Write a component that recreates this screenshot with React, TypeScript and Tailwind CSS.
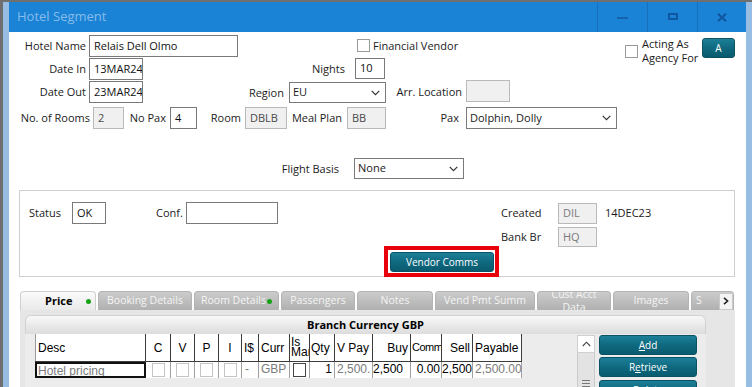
import React from "react";

const teal =
  "bg-[linear-gradient(#1c8098,#0f697f_50%,#0a5b6f)] border border-[#0a5264] rounded-[3px] text-white text-[10px] flex items-center justify-center shrink-0";

function Field({ className = "", gray = false, children }: { className?: string; gray?: boolean; children?: React.ReactNode }) {
  return (
    <div
      className={`shrink-0 border flex items-center pl-[4px] whitespace-nowrap overflow-hidden ${
        gray ? "bg-[#f0f0f0] border-[#b9b9b9] text-[#4a4a4a]" : "bg-white border-[#7a7a7a] text-[#111]"
      } ${className}`}
    >
      {children}
    </div>
  );
}

function Select({ className = "", value }: { className?: string; value: string }) {
  return (
    <div className={`shrink-0 border border-[#7a7a7a] bg-white flex items-center pl-[3px] pr-[5px] ${className}`}>
      <span className="flex-1 whitespace-nowrap">{value}</span>
      <svg width="9" height="6" viewBox="0 0 9 6">
        <path d="M0.7 0.8 L4.5 4.6 L8.3 0.8" fill="none" stroke="#333" strokeWidth="1.2" />
      </svg>
    </div>
  );
}

function Label({ className = "", children }: { className?: string; children: React.ReactNode }) {
  return <div className={`shrink-0 text-right whitespace-nowrap ${className}`}>{children}</div>;
}

function Check({ className = "" }: { className?: string }) {
  return <div className={`shrink-0 w-[13px] h-[13px] border border-[#9a9a9a] bg-white ${className}`} />;
}

const tabOff =
  "h-[19px] rounded-t-[4px] bg-[linear-gradient(#cbcbcb,#b0b0b0)] border border-b-0 border-[#b4b4b4] text-[#f4f4f4] text-[10.5px] flex items-center justify-center shrink-0 overflow-hidden whitespace-nowrap";

const headCols = [
  { label: "Desc", w: "w-[111px]", a: "justify-start pl-[2px] border-l border-l-[#9a9a9a]" },
  { label: "C", w: "w-[25px]", a: "justify-center" },
  { label: "V", w: "w-[24px]", a: "justify-center" },
  { label: "P", w: "w-[24px]", a: "justify-center" },
  { label: "I", w: "w-[23px]", a: "justify-center" },
  { label: "I$", w: "w-[17px]", a: "justify-start pl-[2px]" },
  { label: "Curr", w: "w-[31px]", a: "justify-start pl-[2px]" },
  { label: "IsMar", w: "w-[20px]", a: "" },
  { label: "Qty", w: "w-[25px]", a: "justify-start pl-[1px]" },
  { label: "V Pay", w: "w-[38px]", a: "justify-start pl-[2px]" },
  { label: "Buy", w: "w-[38px]", a: "justify-end pr-[2px]" },
  { label: "Comm", w: "w-[31px]", a: "justify-start pl-[1px] text-[11px] tracking-[-0.5px]" },
  { label: "Sell", w: "w-[31px]", a: "justify-end pr-[2px]" },
  { label: "Payable", w: "w-[49px]", a: "justify-start pl-[2px]" },
];

function Box({ dark = false }: { dark?: boolean }) {
  return (
    <div
      className={`w-[13px] h-[14px] mt-[1px] bg-white border ${dark ? "border-[#444]" : "border-[#c4c4c4]"}`}
    />
  );
}

export default function App() {
  return (
    <div className="w-[752px] h-[387px] overflow-hidden flex flex-col bg-white font-['Open_Sans',sans-serif] text-[11px] text-[#1b1b1b]">
      <div className="h-[2px] bg-[#6f6f6f] shrink-0" />
      <div className="flex flex-1 min-h-0">
        <div className="w-[3px] bg-[#6f6f6f] shrink-0" />
        <div className="w-[6px] bg-[#97bde2] shrink-0" />
        <div className="w-[737px] flex flex-col [&>*]:shrink-0">
          {/* title bar */}
          <div className="h-[30px] bg-[#1b83d6] flex items-center">
            <div className="pl-[8px] text-[13px] text-[#86bcea]">Hotel Segment</div>
            <div className="ml-auto flex h-full">
              <div className="w-[50px] h-full border-l border-[#176fbd] flex items-center justify-center">
                <div className="w-[11px] h-[2px] bg-[#1461ac] mt-[2px]" />
              </div>
              <div className="w-[50px] h-full border-l border-[#176fbd] flex items-center justify-center">
                <div className="w-[10px] h-[7px] border-2 border-[#0f57a0] mb-[1px]" />
              </div>
              <div className="w-[49px] h-full border-l border-[#176fbd] flex items-center justify-center">
                <svg width="10" height="9" viewBox="0 0 10 9">
                  <path d="M1 0.8 L9 8.2 M9 0.8 L1 8.2" stroke="#0f57a0" strokeWidth="2.2" />
                </svg>
              </div>
            </div>
          </div>

          {/* row 1 */}
          <div className="flex items-start mt-[3px] h-[23px]">
            <Label className="w-[80px] pr-[3px] leading-[22px]">Hotel Name</Label>
            <Field className="w-[149px] h-[22px]">Relais Dell Olmo</Field>
            <div className="w-[119px] shrink-0" />
            <div className="w-[268px] shrink-0 flex items-center mt-[4px]">
              <Check />
              <span className="ml-[3px] leading-[13px]">Financial Vendor</span>
            </div>
            <div className="w-[77px] shrink-0 flex items-start">
              <Check className="mt-[10px]" />
              <div className="ml-[4px] mt-[2px] leading-[14px] whitespace-nowrap">
                Acting As
                <br />
                Agency For
              </div>
            </div>
            <div className={`${teal} w-[33px] h-[20px] mt-[3px]`}>A</div>
          </div>

          {/* row 2 */}
          <div className="flex items-start h-[23px]">
            <Label className="w-[80px] pr-[3px] leading-[22px]">Date In</Label>
            <Field className="w-[54px] h-[22px]">13MAR24</Field>
            <Label className="w-[212px] pr-[10px] leading-[22px]">Nights</Label>
            <Field className="w-[30px] h-[21px]">10</Field>
          </div>

          {/* row 3 */}
          <div className="flex items-start h-[26px]">
            <Label className="w-[80px] pr-[3px] leading-[22px]">Date Out</Label>
            <Field className="w-[54px] h-[22px]">23MAR24</Field>
            <Label className="w-[146px] pr-[5px] leading-[22px] mt-[1px]">Region</Label>
            <Select className="w-[97px] h-[21px] mt-[1px]" value="EU" />
            <Label className="w-[80px] pr-[4px] leading-[22px]">Arr. Location</Label>
            <Field gray className="w-[44px] h-[22px] mt-[-1px]" />
          </div>

          {/* row 4 */}
          <div className="flex items-start h-[22px]">
            <Label className="w-[84px] pr-[3px] leading-[22px]">No. of Rooms</Label>
            <Field gray className="w-[31px] h-[22px]">2</Field>
            <Label className="w-[46px] pr-[4px] leading-[22px]">No Pax</Label>
            <Field className="w-[27px] h-[22px]">4</Field>
            <Label className="w-[48px] pr-[4px] leading-[22px]">Room</Label>
            <Field gray className="w-[42px] h-[22px]">DBLB</Field>
            <Label className="w-[60px] pr-[5px] leading-[22px]">Meal Plan</Label>
            <Field gray className="w-[39px] h-[22px]">BB</Field>
            <Label className="w-[80px] pr-[7px] leading-[22px]">Pax</Label>
            <Select className="w-[151px] h-[22px]" value="Dolphin, Dolly" />
          </div>

          {/* row 5 */}
          <div className="flex items-start h-[21px] mt-[29px]">
            <Label className="w-[345px] pr-[15px] leading-[21px]">Flight Basis</Label>
            <Select className="w-[110px] h-[21px]" value="None" />
          </div>

          {/* status box */}
          <div className="mt-[11px] ml-[10px] w-[716px] h-[87px] border border-[#cfcfcf]">
            <div className="flex items-center h-[22px] mt-[11px]">
              <div className="w-[52px] pl-[9px] shrink-0">Status</div>
              <Field className="w-[34px] h-[22px]">OK</Field>
              <div className="w-[50px] shrink-0" />
              <div className="w-[30px] shrink-0">Conf.</div>
              <Field className="w-[92px] h-[22px]" />
              <div className="w-[223px] shrink-0" />
              <div className="w-[57px] shrink-0">Created</div>
              <Field gray className="w-[39px] h-[21px] text-[#7a7a7a]">DIL</Field>
              <div className="ml-[8px]">14DEC23</div>
            </div>
            <div className="flex items-center h-[20px] mt-[3px]">
              <div className="w-[481px] shrink-0" />
              <div className="w-[57px] shrink-0">Bank Br</div>
              <Field gray className="w-[39px] h-[20px] text-[#7a7a7a]">HQ</Field>
            </div>
            <div className="ml-[364px] mt-[-1px] w-fit border-4 border-[#e8000b] pt-[2px] pl-[2px] pr-[1px] pb-[1px]">
              <div className={`${teal} w-[104px] h-[20px]`}>Vendor Comms</div>
            </div>
          </div>

          {/* tabs */}
          <div className="ml-[11px] w-[715px] mt-[14px]">
            <div className="flex gap-[2px] h-[19px] items-end">
              <div className="w-[76px] h-[19px] rounded-t-[4px] bg-[linear-gradient(#fbfbfb,#e9e9e9)] border border-b-0 border-[#cfcfcf] flex items-center shrink-0">
                <span className="pl-[24px] font-bold text-black">Price</span>
                <span className="ml-[14px] w-[5px] h-[5px] rounded-full bg-[#17a317]" />
              </div>
              <div className={`${tabOff} w-[94px]`}>Booking Details</div>
              <div className={`${tabOff} w-[85px]`}>
                Room Details
                <span className="ml-[1px] w-[5px] h-[5px] rounded-full bg-[#17a317]" />
              </div>
              <div className={`${tabOff} w-[74px]`}>Passengers</div>
              <div className={`${tabOff} w-[76px]`}>Notes</div>
              <div className={`${tabOff} w-[100px]`}>Vend Pmt Summ</div>
              <div className={`${tabOff} w-[74px] flex-col leading-[13px]`}>
                <span>Cust Acct</span>
                <span>Data</span>
              </div>
              <div className={`${tabOff} w-[76px]`}>Images</div>
              <div className={`${tabOff} w-[43px] justify-start! pl-[4px]`}>
                <span>S</span>
                <div className="ml-auto w-[14px] h-[17px] bg-[#f3f3f3] border border-[#c9c9c9] flex items-center justify-center">
                  <svg width="6" height="8" viewBox="0 0 6 8">
                    <path d="M1 0.8 L4.6 4 L1 7.2" fill="none" stroke="#222" strokeWidth="1.6" />
                  </svg>
                </div>
              </div>
            </div>

            <div className="bg-[#e6e6e6] h-[80px] pt-[5px] pl-[5px]">
              <div className="w-[681px] h-[19px] rounded-t-[6px] bg-[linear-gradient(#f8f8f8,#dcdcdc)] border border-b-0 border-[#d2d2d2] flex items-center justify-center font-bold text-black">
                Branch Currency GBP
              </div>
              <div className="w-[681px] h-[60px] bg-[#ececec] flex">
                <div className="w-[10px] shrink-0" />
                {/* grid */}
                <div className="w-[487px] shrink-0 font-['Liberation_Sans',Arial,sans-serif] text-[12px] text-black">
                  <div className="flex h-[28px] bg-white border-b border-[#3c3c3c]">
                    {headCols.map((c) => (
                      <div
                        key={c.label}
                        className={`${c.w} h-full shrink-0 border-r border-[#3c3c3c] flex items-center overflow-hidden whitespace-nowrap ${c.a}`}
                      >
                        {c.label === "IsMar" ? (
                          <div className="leading-[10px] pl-[1px] self-start pt-[3px]">
                            Is
                            <br />
                            Mar
                          </div>
                        ) : (
                          c.label
                        )}
                      </div>
                    ))}
                  </div>
                  <div className="flex h-[16px] bg-white leading-[14px]">
                    <div className="w-[111px] shrink-0 border-2 border-[#111] text-[#7b7b7b] pl-[1px] overflow-hidden whitespace-nowrap">
                      Hotel pricing
                    </div>
                    <div className="w-[25px] shrink-0 border-r border-[#a0a0a0] flex justify-center"><Box /></div>
                    <div className="w-[24px] shrink-0 border-r border-[#a0a0a0] flex justify-center"><Box /></div>
                    <div className="w-[24px] shrink-0 border-r border-[#a0a0a0] flex justify-center"><Box /></div>
                    <div className="w-[23px] shrink-0 border-r border-[#a0a0a0] flex justify-center"><Box /></div>
                    <div className="w-[17px] shrink-0 border-r border-[#a0a0a0] pl-[3px] text-[#7b7b7b]">-</div>
                    <div className="w-[31px] shrink-0 border-r border-[#a0a0a0] pl-[2px] text-[#7b7b7b]">GBP</div>
                    <div className="w-[20px] shrink-0 border-r border-[#a0a0a0] flex justify-center"><Box dark /></div>
                    <div className="w-[25px] shrink-0 border-r border-[#a0a0a0] text-right pr-[2px]">1</div>
                    <div className="w-[38px] shrink-0 border-r border-[#a0a0a0] pl-[2px] text-[#7b7b7b] overflow-hidden whitespace-nowrap">2,500.</div>
                    <div className="w-[38px] shrink-0 border-r border-[#a0a0a0] overflow-hidden whitespace-nowrap">2,500</div>
                    <div className="w-[31px] shrink-0 border-r border-[#a0a0a0] text-right pr-[1px]">0.00</div>
                    <div className="w-[31px] shrink-0 border-r border-[#a0a0a0] text-right pr-[1px]">2,500</div>
                    <div className="w-[49px] shrink-0 border-r border-[#a0a0a0] pl-[2px] text-[#7b7b7b] whitespace-nowrap">2,500.00</div>
                  </div>
                </div>
                <div className="w-[55px] shrink-0" />
                {/* scrollbar */}
                <div className="w-[18px] shrink-0 mt-[1px] flex flex-col">
                  <div className="h-[18px] bg-white border border-[#d0d0d0] flex items-center justify-center">
                    <svg width="9" height="6" viewBox="0 0 9 6">
                      <path d="M0.8 5 L4.5 1.2 L8.2 5" fill="none" stroke="#444" strokeWidth="1.1" />
                    </svg>
                  </div>
                  <div className="flex-1 bg-[#e3e3e3] border border-t-0 border-[#cacaca] flex flex-col items-center pt-[27px]">
                    <div className="w-[8px] h-[1px] bg-[#777]" />
                    <div className="w-[8px] h-[1px] bg-[#777] mt-[2px]" />
                    <div className="w-[8px] h-[1px] bg-[#777] mt-[2px]" />
                  </div>
                </div>
                <div className="w-[4px] shrink-0" />
                <div className="w-[98px] shrink-0 mt-[1px] flex flex-col gap-[2px]">
                  <div className={`${teal} h-[20px]`}>
                    <span className="underline">A</span>dd
                  </div>
                  <div className={`${teal} h-[20px]`}>
                    R<span className="underline">e</span>trieve
                  </div>
                  <div className={`${teal} h-[20px] mt-[1px]`}>Delete</div>
                </div>
              </div>
            </div>
          </div>
        </div>
        <div className="w-[6px] bg-[#97bde2] shrink-0" />
      </div>
    </div>
  );
}
